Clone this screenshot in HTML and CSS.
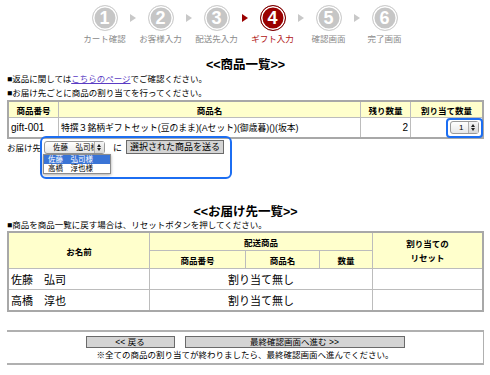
FILE: index.html
```html
<!DOCTYPE html>
<html lang="ja">
<head>
    <meta charset="UTF-8">
    <title>ギフト入力</title>
    <link rel="stylesheet" href="styles.css">
</head>
<body>
    <div class="steps">
        <div class="step"><span class="num">1</span><span class="label">カート確認</span></div>
        <span class="arrow"></span>
        <div class="step"><span class="num">2</span><span class="label">お客様入力</span></div>
        <span class="arrow"></span>
        <div class="step"><span class="num">3</span><span class="label">配送先入力</span></div>
        <span class="arrow current"></span>
        <div class="step current"><span class="num">4</span><span class="label">ギフト入力</span></div>
        <span class="arrow"></span>
        <div class="step"><span class="num">5</span><span class="label">確認画面</span></div>
        <span class="arrow"></span>
        <div class="step"><span class="num">6</span><span class="label">完了画面</span></div>
    </div>

    <h2 class="title">&lt;&lt;商品一覧&gt;&gt;</h2>
    <p class="note">■返品に関しては<a href="#">こちらのページ</a>でご確認ください。</p>
    <p class="note">■お届け先ごとに商品の割り当てを行ってください。</p>

    <table class="grid items">
        <tr>
            <th class="c-code">商品番号</th>
            <th>商品名</th>
            <th class="c-left">残り数量</th>
            <th class="c-qty">割り当て数量</th>
        </tr>
        <tr>
            <td>gift-001</td>
            <td class="name-cell">特撰３銘柄ギフトセット(豆のまま)(Aセット)(御歳暮)()(坂本)</td>
            <td class="num-cell">2</td>
            <td class="qty-cell">
                <span class="qty-focus"></span>
                <span class="mini-select">1<span class="updown"></span></span>
            </td>
        </tr>
    </table>

    <div class="send-row">
        <span>お届け先</span>
        <div class="send-pick">
            <span class="focus-frame"></span>
            <span class="fake-select">佐藤　弘司様<span class="updown"></span></span>
            <ul class="dropdown">
                <li class="selected">佐藤　弘司様</li>
                <li>高橋　淳也様</li>
            </ul>
            <span class="ni">に</span>
            <button class="btn send">選択された商品を送る</button>
        </div>
    </div>

    <h2 class="title second">&lt;&lt;お届け先一覧&gt;&gt;</h2>
    <p class="note small">■商品を商品一覧に戻す場合は、リセットボタンを押してください。</p>

    <table class="grid dest">
        <tr class="h1">
            <th rowspan="2" class="c-name">お名前</th>
            <th colspan="3">配送商品</th>
            <th rowspan="2" class="c-reset">割り当ての<br>リセット</th>
        </tr>
        <tr class="h2">
            <th class="c-gcode">商品番号</th>
            <th class="c-gname">商品名</th>
            <th class="c-gqty">数量</th>
        </tr>
        <tr class="row">
            <td>佐藤　弘司</td>
            <td colspan="3" class="center">割り当て無し</td>
            <td></td>
        </tr>
        <tr class="row">
            <td>高橋　淳也</td>
            <td colspan="3" class="center">割り当て無し</td>
            <td></td>
        </tr>
    </table>

    <div class="footer-box">
        <div class="buttons">
            <button class="btn back">&lt;&lt; 戻る</button>
            <button class="btn next">最終確認画面へ進む &gt;&gt;</button>
        </div>
        <p class="footer-note">※全ての商品の割り当てが終わりましたら、最終確認画面へ進んでください。</p>
    </div>
</body>
</html>
```

FILE: styles.css
```css
body {
    margin: 0 6px 0 7px;
    font-family: 'Liberation Sans', 'Noto Sans CJK JP', sans-serif;
    font-size: 8.5px;
    color: #000;
    background: #fff;
}

/* step bar */
.steps {
    display: flex;
    justify-content: center;
    align-items: flex-start;
    padding-top: 5px;
    margin-left: -2px;
}

.step {
    width: 40px;
    display: flex;
    flex-direction: column;
    align-items: center;
}

.step .num {
    width: 24px;
    height: 24px;
    border-radius: 50%;
    background: #c6c6c6;
    border: 1px solid #d0d0d0;
    box-shadow: inset 0 0 0 1.5px #fff;
    color: #fff;
    font-family: 'Liberation Sans', sans-serif;
    font-weight: bold;
    font-size: 18px;
    line-height: 24px;
    text-align: center;
}

.step .label {
    margin-top: 2px;
    line-height: 12px;
    font-size: 8.5px;
    color: #8a8a8a;
    white-space: nowrap;
}

.step.current .num {
    background: #9a0000;
    border-color: #7a0000;
}

.step.current .label {
    color: #b01515;
}

.arrow {
    width: 16px;
    height: 26px;
    display: flex;
    justify-content: center;
    align-items: center;
}

.arrow::before {
    content: "";
    border-left: 6px solid #c8c8c8;
    border-top: 4px solid transparent;
    border-bottom: 4px solid transparent;
}

.arrow.current::before {
    border-left-color: #9a0000;
}

/* titles and notes */
.title {
    margin: 13px 0 0;
    text-align: center;
    font-size: 12.5px;
    line-height: 14px;
    font-weight: bold;
}

.title.second {
    margin-top: 51px;
}

.note {
    margin: 0;
    line-height: 14px;
}

.note.small {
    line-height: 12px;
}

.note a {
    color: #5b3cc4;
}

/* tables */
.grid {
    width: 100%;
    border-collapse: collapse;
    border: 2px solid #a8a8a8;
}

.grid th,
.grid td {
    border: 1px solid #bcbcbc;
    padding: 0 2px;
}

.grid th {
    background: #ffffcc;
    font-weight: bold;
    font-size: 8.5px;
}

.items th {
    height: 15px;
}

.items td {
    height: 19px;
    font-size: 10px;
}

.items .name-cell {
    font-size: 8.8px;
}

.items .c-code { width: 45px; }
.items .c-left { width: 45px; }
.items .c-qty { width: 67px; }

.num-cell {
    text-align: right;
}

.qty-cell {
    position: relative;
    text-align: right;
}

.mini-select {
    position: relative;
    display: inline-block;
    width: 19px;
    height: 11px;
    padding-left: 8px;
    margin-right: 1px;
    border: 1px solid #9a9a9a;
    border-radius: 3px;
    background: linear-gradient(#fff, #e8e8e8);
    font-size: 8px;
    line-height: 11px;
    text-align: left;
    vertical-align: middle;
}

.qty-focus {
    position: absolute;
    right: -1px;
    top: 0;
    width: 33px;
    height: 16px;
    border: 2px solid #1c6ef2;
    border-radius: 4px;
}

.updown {
    position: absolute;
    right: 0;
    top: 0;
    bottom: 0;
    width: 9px;
    border-left: 1px solid #b0b0b0;
    background: linear-gradient(#f6f6f6, #d8d8d8);
}

.updown::before,
.updown::after {
    content: "";
    position: absolute;
    left: 2px;
    border-left: 2.5px solid transparent;
    border-right: 2.5px solid transparent;
}

.updown::before {
    top: 2px;
    border-bottom: 3px solid #222;
}

.updown::after {
    bottom: 2px;
    border-top: 3px solid #222;
}

/* send row */
.send-row {
    display: flex;
    align-items: center;
    margin-top: 1px;
    height: 14px;
}

.send-pick {
    position: relative;
    display: flex;
    align-items: center;
    margin-left: 3px;
}

.focus-frame {
    position: absolute;
    left: -4px;
    top: -4px;
    width: 188px;
    height: 39px;
    border: 2px solid #1c6ef2;
    border-radius: 6px;
}

.fake-select {
    position: relative;
    width: 51px;
    height: 11px;
    padding-left: 8px;
    border: 1px solid #9a9a9a;
    border-radius: 3px;
    background: linear-gradient(#fff, #e8e8e8);
    font-size: 7.5px;
    line-height: 11px;
    white-space: nowrap;
}

.dropdown {
    position: absolute;
    left: -1px;
    top: 14px;
    width: 66px;
    margin: 0;
    padding: 0;
    list-style: none;
    background: #fff;
    border: 1px solid #8c8c8c;
    box-shadow: 0 1px 3px rgba(0, 0, 0, 0.35);
    font-size: 7.5px;
    line-height: 9px;
}

.dropdown li {
    padding: 0 4px;
}

.dropdown li.selected {
    background: #3a74d6;
    color: #fff;
}

.ni {
    margin: 0 4px 0 8px;
    font-size: 9px;
}

.btn {
    margin: 0;
    padding: 0;
    font-family: inherit;
    background: #d4d4d4;
    border: 1px solid #6a6a6a;
    border-radius: 0;
    color: #000;
}

.btn.send {
    width: 98px;
    height: 14px;
    font-size: 9px;
    line-height: 12px;
}

/* destination table */
.dest .h1 th,
.dest .h2 th {
    height: 17px;
}

.dest .c-name { width: 136px; }
.dest .c-gcode { width: 91px; }
.dest .c-gname { width: 69px; }
.dest .c-gqty { width: 48px; }
.dest .c-reset { line-height: 14px; }

.dest td {
    height: 20px;
    font-size: 11px;
}

.dest .center {
    text-align: center;
}

/* footer */
.footer-box {
    margin: 18px -1px 0 -2px;
    border: 2px solid #b0b0b0;
    height: 31px;
    text-align: center;
}

.buttons {
    display: flex;
    justify-content: center;
    gap: 10px;
    margin-top: 4px;
}

.btn.back,
.btn.next {
    height: 12px;
    font-size: 8.5px;
    line-height: 10px;
}

.btn.back { width: 89px; }
.btn.next { width: 220px; }

.footer-note {
    margin: 1px 0 0;
    line-height: 12px;
}
```
